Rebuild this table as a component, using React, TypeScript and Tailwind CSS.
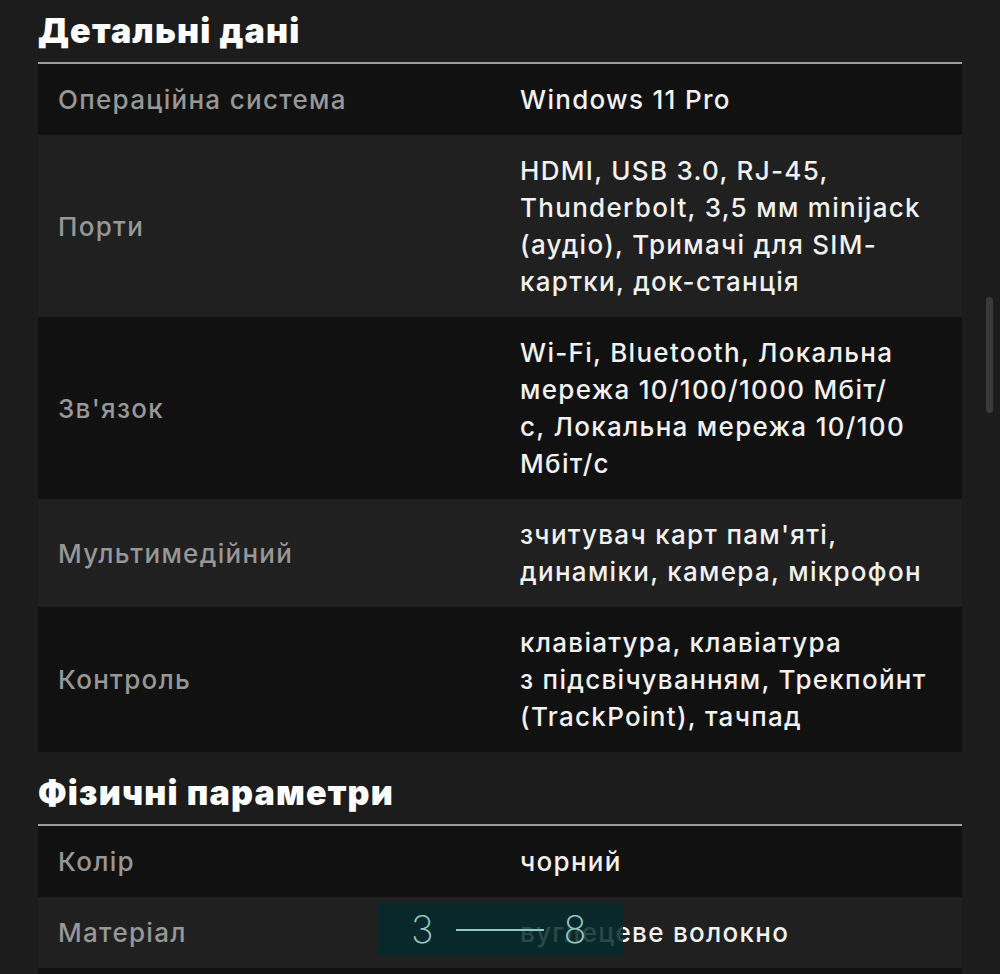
import React from 'react';

type Spec = { label: string; lines: string[] };

const details: Spec[] = [
  { label: 'Операційна система', lines: ['Windows 11 Pro'] },
  {
    label: 'Порти',
    lines: ['HDMI, USB 3.0, RJ-45,', 'Thunderbolt, 3,5 мм minijack', '(аудіо), Тримачі для SIM-', 'картки, док-станція'],
  },
  {
    label: "Зв'язок",
    lines: ['Wi-Fi, Bluetooth, Локальна', 'мережа 10/100/1000 Мбіт/', 'с, Локальна мережа 10/100', 'Мбіт/с'],
  },
  { label: 'Мультимедійний', lines: ["зчитувач карт пам'яті,", 'динаміки, камера, мікрофон'] },
  {
    label: 'Контроль',
    lines: ['клавіатура, клавіатура', 'з підсвічуванням, Трекпойнт', '(TrackPoint), тачпад'],
  },
];

const physical: Spec[] = [
  { label: 'Колір', lines: ['чорний'] },
  { label: 'Матеріал', lines: ['вуглецеве волокно'] },
  { label: 'Вага', lines: ['1,12 кг'] },
];

function SpecTable({ rows }: { rows: Spec[] }) {
  return (
    <div className="border-t-2 border-[#9c9c9c]">
      {rows.map((row, i) => (
        <div
          key={row.label}
          className={`grid grid-cols-[482px_1fr] items-center py-[17px] ${
            i % 2 === 0 ? 'bg-[#111111]' : 'bg-[#202020]'
          }`}
        >
          <div className="px-5 text-[#979797]">{row.label}</div>
          <div className="pr-5 text-[#f2f2f2]">
            {row.lines.map((line) => (
              <div key={line} className="whitespace-nowrap">
                {line}
              </div>
            ))}
          </div>
        </div>
      ))}
    </div>
  );
}

export default function App() {
  return (
    <div
      className="relative h-[974px] w-[1000px] overflow-hidden bg-[#1c1c1c] text-[26px] leading-[37px] font-medium tracking-[0.05em]"
      style={{ fontFamily: 'Inter, "Noto Sans", sans-serif' }}
    >
      <div className="mx-[38px] pt-[10px]">
        <h2 className="mb-[10px] text-[34px] font-black leading-[42px] tracking-[0.035em] text-white">
          Детальні дані
        </h2>
        <SpecTable rows={details} />
        <h2 className="mt-[20px] mb-[10px] text-[34px] font-black leading-[42px] tracking-[0.035em] text-white">
          Фізичні параметри
        </h2>
        <SpecTable rows={physical} />
      </div>

      {/* scrollbar thumb */}
      <div className="absolute right-[7px] top-[297px] h-[116px] w-[7px] rounded-full bg-[#3a3a3a]" />

      {/* page counter overlay */}
      <div className="absolute left-[378px] top-[903px] flex h-[53px] w-[245px] items-center bg-[#052a2d]/85 pl-[33px] text-[38px] font-extralight tracking-normal text-[#94c9c3]">
        <span>3</span>
        <span className="ml-[22px] h-[2px] w-[88px] bg-[#94c9c3]" />
        <span className="ml-[20px]">8</span>
      </div>
    </div>
  );
}
